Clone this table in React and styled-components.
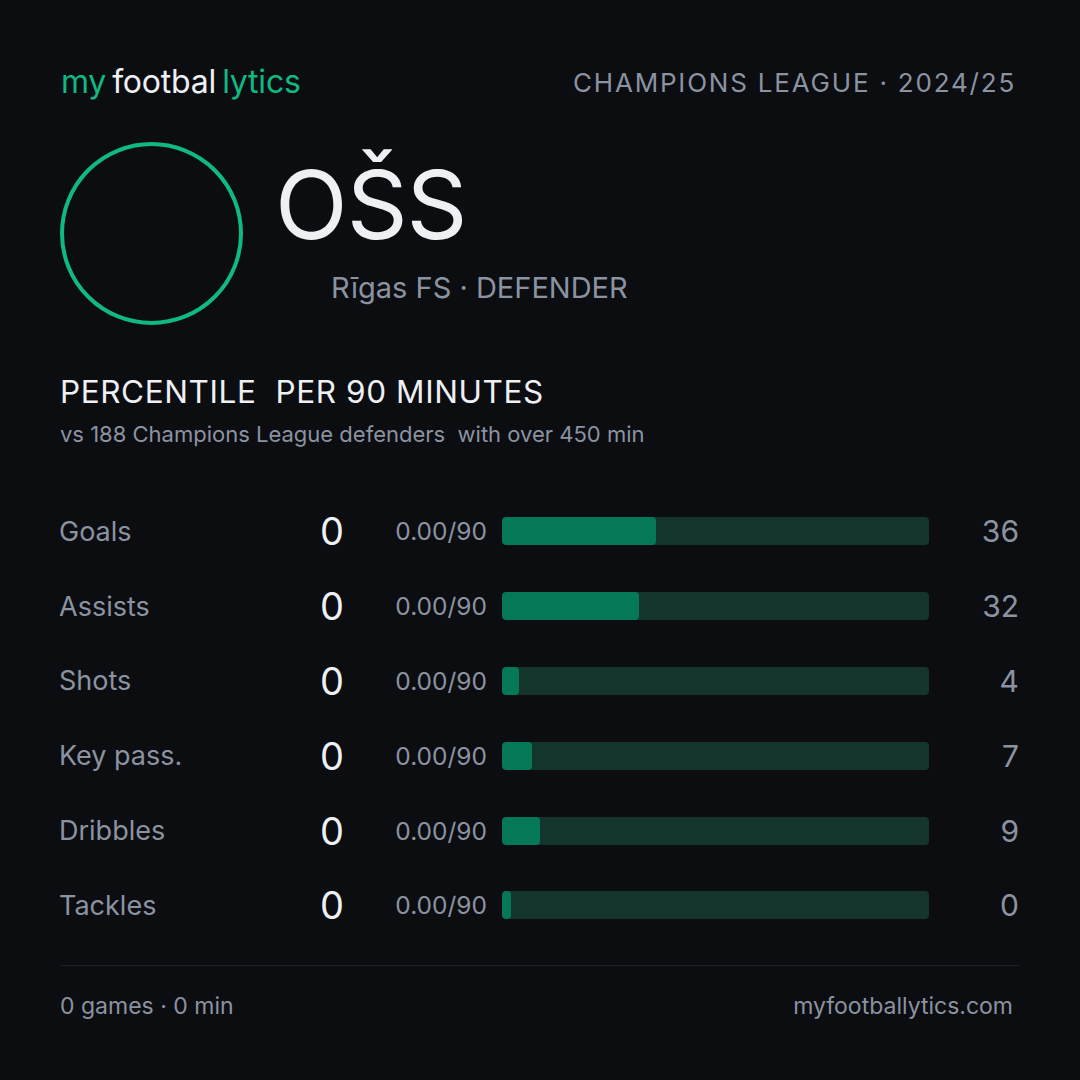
import React from "react";
import styled, { createGlobalStyle } from "styled-components";

const Global = createGlobalStyle`
  html, body { margin: 0; padding: 0; background: #0b0d11; }
  body { font-family: Inter, "Noto Sans", sans-serif; }
`;

const Card = styled.div`
  width: 1080px;
  height: 1080px;
  box-sizing: border-box;
  background: #0b0d11;
  padding: 62px 60px 0 60px;
  display: flex;
  flex-direction: column;
  color: #e8ebf0;
`;

const Header = styled.div`
  display: flex;
  justify-content: space-between;
  align-items: center;
  height: 40px;
`;

const Logo = styled.div`
  display: flex;
  gap: 6px;
  font-size: 32px;
  letter-spacing: -0.2px;
  line-height: 40px;
  margin-left: 1px;
`;

const LogoPart = styled.span`
  color: ${(p) => (p.$accent ? "#10b981" : "#eef0f4")};
`;

const Competition = styled.div`
  font-size: 26px;
  letter-spacing: 1.8px;
  color: #8b93a1;
  margin-right: 4px;
`;

const Hero = styled.div`
  display: flex;
  align-items: flex-start;
  gap: 32px;
  margin-top: 40px;
`;

const Avatar = styled.div`
  width: 183px;
  height: 183px;
  box-sizing: border-box;
  border-radius: 50%;
  border: 4px solid #10b981;
  flex-shrink: 0;
`;

const Identity = styled.div`
  display: flex;
  flex-direction: column;
  padding-top: 8px;
`;

const Name = styled.div`
  font-size: 95px;
  line-height: 110px;
  color: #eef0f4;
  letter-spacing: -1px;
`;

const Meta = styled.div`
  font-size: 29px;
  color: #8b93a1;
  margin-left: 56px;
  margin-top: 10px;
`;

const Section = styled.div`
  margin-top: 48px;
`;

const SectionTitle = styled.div`
  font-size: 31.5px;
  letter-spacing: 0.6px;
  color: #eef0f4;
  white-space: pre;
  line-height: 38px;
`;

const SectionSub = styled.div`
  font-size: 22px;
  color: #8b93a1;
  white-space: pre;
  margin-top: 10px;
`;

const Rows = styled.div`
  margin-top: 47px;
  display: flex;
  flex-direction: column;
`;

const Row = styled.div`
  display: grid;
  grid-template-columns: 250px 34px 158px 427px 91px;
  align-items: center;
  height: 74.8px;
`;

const Label = styled.div`
  font-size: 27px;
  color: #8b93a1;
  margin-left: -1px;
`;

const Value = styled.div`
  font-size: 38px;
  color: #eef0f4;
  text-align: right;
`;

const Per90 = styled.div`
  font-size: 24.5px;
  color: #8b93a1;
  text-align: right;
  padding-right: 15px;
`;

const Track = styled.div`
  height: 28px;
  border-radius: 4px;
  background: #14352b;
  overflow: hidden;
`;

const Fill = styled.div`
  height: 100%;
  border-radius: 4px;
  background: #047857;
  min-width: 9px;
`;

const Pct = styled.div`
  font-size: 30px;
  color: #8b93a1;
  text-align: right;
  padding-right: 1px;
`;

const Divider = styled.div`
  height: 1px;
  background: #1d2028;
  margin-top: 22px;
`;

const Footer = styled.div`
  display: flex;
  justify-content: space-between;
  align-items: center;
  font-size: 23px;
  color: #8b93a1;
  margin-top: 26px;
  padding-right: 7px;
`;

const stats = [
  { label: "Goals", value: 0, per90: "0.00/90", pct: 36 },
  { label: "Assists", value: 0, per90: "0.00/90", pct: 32 },
  { label: "Shots", value: 0, per90: "0.00/90", pct: 4 },
  { label: "Key pass.", value: 0, per90: "0.00/90", pct: 7 },
  { label: "Dribbles", value: 0, per90: "0.00/90", pct: 9 },
  { label: "Tackles", value: 0, per90: "0.00/90", pct: 0 },
];

export default function App() {
  return (
    <>
      <Global />
      <Card>
        <Header>
          <Logo>
            <LogoPart $accent>my</LogoPart>
            <LogoPart>footbal</LogoPart>
            <LogoPart $accent>lytics</LogoPart>
          </Logo>
          <Competition>CHAMPIONS LEAGUE · 2024/25</Competition>
        </Header>
        <Hero>
          <Avatar />
          <Identity>
            <Name>OŠS</Name>
            <Meta>Rīgas FS · DEFENDER</Meta>
          </Identity>
        </Hero>
        <Section>
          <SectionTitle>{"PERCENTILE  PER 90 MINUTES"}</SectionTitle>
          <SectionSub>{"vs 188 Champions League defenders  with over 450 min"}</SectionSub>
        </Section>
        <Rows>
          {stats.map((s) => (
            <Row key={s.label}>
              <Label>{s.label}</Label>
              <Value>{s.value}</Value>
              <Per90>{s.per90}</Per90>
              <Track>
                <Fill style={{ width: `${s.pct}%` }} />
              </Track>
              <Pct>{s.pct}</Pct>
            </Row>
          ))}
        </Rows>
        <Divider />
        <Footer>
          <span>0 games · 0 min</span>
          <span>myfootballytics.com</span>
        </Footer>
      </Card>
    </>
  );
}
